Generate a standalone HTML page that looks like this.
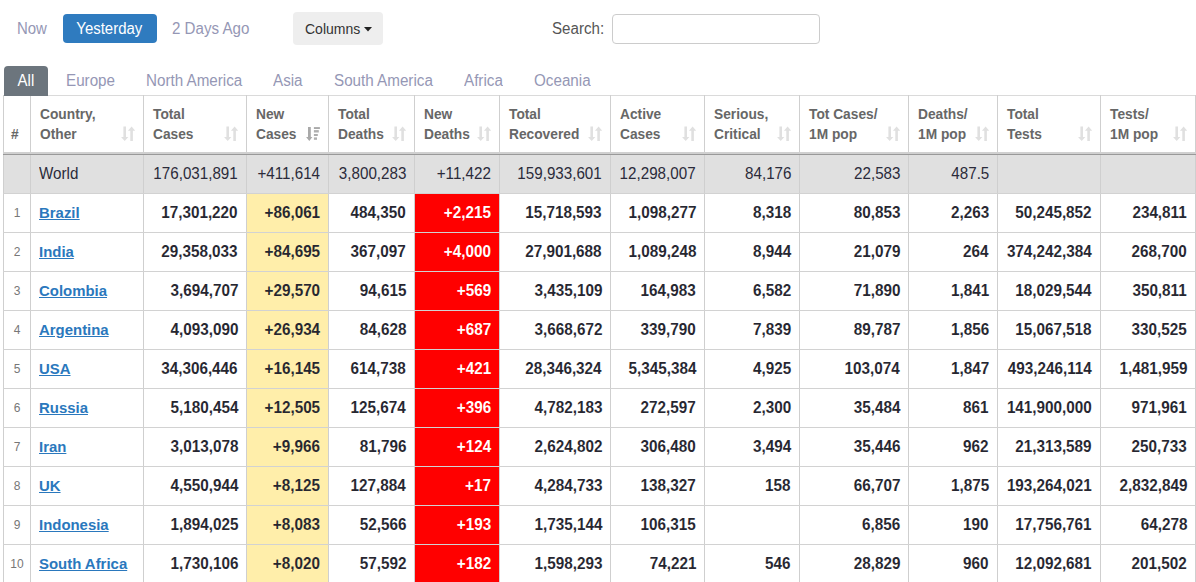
<!DOCTYPE html>
<html><head><meta charset="utf-8"><title>Coronavirus table</title>
<style>
html,body{margin:0;padding:0;background:#fff;}
body{width:1196px;height:582px;overflow:hidden;position:relative;font-family:"Liberation Sans",sans-serif;}
.a{position:absolute;white-space:nowrap;}
.top{font-size:16px;line-height:20px;color:#9597b5;}
.sx{display:inline-block;transform:scaleX(0.935);transform-origin:0 50%;}
.sc{display:inline-block;transform:scaleX(0.935);transform-origin:50% 50%;}
.btn{position:absolute;left:63px;top:14px;width:94px;height:29px;background:#2f7bbf;border-radius:4px;color:#fff;font-size:16px;line-height:29px;text-align:center;}
.cols{position:absolute;left:293px;top:12px;width:90px;height:33px;background:#eeeeee;border-radius:4px;color:#333;font-size:14px;line-height:33px;}
.srch{position:absolute;left:612px;top:14px;width:206px;height:28px;border:1px solid #ccc;border-radius:4px;background:#fff;}
.tab{position:absolute;top:66px;height:30px;line-height:30px;font-size:16px;color:#9597b5;}
.tabA{position:absolute;z-index:2;left:4px;top:66px;width:44px;height:30px;background:#6c757d;border-radius:4px 4px 0 0;color:#fff;font-size:16px;line-height:30px;text-align:center;}
.vl{position:absolute;width:1px;background:#cfcfcf;}
.hl{position:absolute;height:1px;background:#d2d2d2;}
.th{position:absolute;font-weight:bold;font-size:13.75px;line-height:20px;color:#676767;white-space:nowrap;}
.td{position:absolute;font-size:16.5px;line-height:38px;height:38px;white-space:nowrap;text-align:right;font-weight:bold;color:#262630;}
.td span{display:inline-block;transform:scaleX(0.925);transform-origin:100% 50%;-webkit-text-stroke:0.05px #fff;}
.ty span{-webkit-text-stroke-color:#ffeeaa;}
.tr span{-webkit-text-stroke-color:#ff0000;}
.wd span{-webkit-text-stroke:0;}
.wd span{transform:scaleX(0.92);}
.rk{position:absolute;font-size:12px;line-height:38px;height:38px;text-align:center;color:#777;}
.cn{position:absolute;font-size:15.5px;transform:scaleX(0.963);transform-origin:0 50%;line-height:38px;height:38px;font-weight:bold;color:#2a78bd;text-decoration:underline;white-space:nowrap;}
.wd{font-weight:normal;color:#2b2b3a;}
.wd.l span{transform-origin:0 50%;}
</style></head><body>

<div class="a top" style="left:17px;top:19px;"><span class="sx">Now</span></div>
<div class="btn"><span class="sc" style="margin-left:-1px">Yesterday</span></div>
<div class="a top" style="left:172px;top:19px;"><span class="sx" style="transform:scaleX(0.945)">2 Days Ago</span></div>
<div class="cols"><span style="position:absolute;left:12px;top:1px;">Columns</span><svg style="position:absolute;left:71px;top:15px" width="8" height="5" viewBox="0 0 8 5"><path d="M0 0H8L4 4.5Z" fill="#222"/></svg></div>
<div class="a top" style="left:552px;top:19px;color:#555;"><span class="sx" style="transform:scaleX(0.945)">Search:</span></div>
<div class="srch"></div>
<div class="tabA"><span class="sc">All</span></div>
<div class="tab" style="left:66px;"><span class="sx" style="transform:scaleX(0.95)">Europe</span></div>
<div class="tab" style="left:146px;"><span class="sx" style="transform:scaleX(0.95)">North America</span></div>
<div class="tab" style="left:273px;"><span class="sx" style="transform:scaleX(0.95)">Asia</span></div>
<div class="tab" style="left:334px;"><span class="sx" style="transform:scaleX(0.95)">South America</span></div>
<div class="tab" style="left:464px;"><span class="sx" style="transform:scaleX(0.95)">Africa</span></div>
<div class="tab" style="left:534px;"><span class="sx" style="transform:scaleX(0.95)">Oceania</span></div>
<div class="a" style="left:4px;top:155px;width:1191px;height:38px;background:#e0e0e0;"></div>
<div class="a" style="left:247px;top:194px;width:81px;height:38px;background:#ffeeaa;"></div>
<div class="a" style="left:415px;top:194px;width:84px;height:38px;background:#ff0000;"></div>
<div class="a" style="left:247px;top:233px;width:81px;height:38px;background:#ffeeaa;"></div>
<div class="a" style="left:415px;top:233px;width:84px;height:38px;background:#ff0000;"></div>
<div class="a" style="left:247px;top:272px;width:81px;height:38px;background:#ffeeaa;"></div>
<div class="a" style="left:415px;top:272px;width:84px;height:38px;background:#ff0000;"></div>
<div class="a" style="left:247px;top:311px;width:81px;height:38px;background:#ffeeaa;"></div>
<div class="a" style="left:415px;top:311px;width:84px;height:38px;background:#ff0000;"></div>
<div class="a" style="left:247px;top:350px;width:81px;height:38px;background:#ffeeaa;"></div>
<div class="a" style="left:415px;top:350px;width:84px;height:38px;background:#ff0000;"></div>
<div class="a" style="left:247px;top:389px;width:81px;height:38px;background:#ffeeaa;"></div>
<div class="a" style="left:415px;top:389px;width:84px;height:38px;background:#ff0000;"></div>
<div class="a" style="left:247px;top:428px;width:81px;height:38px;background:#ffeeaa;"></div>
<div class="a" style="left:415px;top:428px;width:84px;height:38px;background:#ff0000;"></div>
<div class="a" style="left:247px;top:467px;width:81px;height:38px;background:#ffeeaa;"></div>
<div class="a" style="left:415px;top:467px;width:84px;height:38px;background:#ff0000;"></div>
<div class="a" style="left:247px;top:506px;width:81px;height:38px;background:#ffeeaa;"></div>
<div class="a" style="left:415px;top:506px;width:84px;height:38px;background:#ff0000;"></div>
<div class="a" style="left:247px;top:545px;width:81px;height:38px;background:#ffeeaa;"></div>
<div class="a" style="left:415px;top:545px;width:84px;height:38px;background:#ff0000;"></div>
<div class="hl" style="left:3px;top:95px;width:1193px;background:#dadada;"></div>
<div class="vl" style="left:3px;top:95px;height:487px;"></div>
<div class="vl" style="left:30px;top:95px;height:487px;"></div>
<div class="vl" style="left:143px;top:95px;height:487px;"></div>
<div class="vl" style="left:246px;top:95px;height:487px;"></div>
<div class="vl" style="left:328px;top:95px;height:487px;"></div>
<div class="vl" style="left:414px;top:95px;height:487px;"></div>
<div class="vl" style="left:499px;top:95px;height:487px;"></div>
<div class="vl" style="left:610px;top:95px;height:487px;"></div>
<div class="vl" style="left:704px;top:95px;height:487px;"></div>
<div class="vl" style="left:799px;top:95px;height:487px;"></div>
<div class="vl" style="left:908px;top:95px;height:487px;"></div>
<div class="vl" style="left:997px;top:95px;height:487px;"></div>
<div class="vl" style="left:1100px;top:95px;height:487px;"></div>
<div class="vl" style="left:1195px;top:95px;height:487px;"></div>
<div class="hl" style="left:3px;top:152px;width:1193px;height:2px;background:#d0d0d0;"></div>
<div class="hl" style="left:3px;top:154px;width:1193px;background:#999;"></div>
<div class="hl" style="left:3px;top:193px;width:1193px;"></div>
<div class="hl" style="left:3px;top:232px;width:1193px;"></div>
<div class="hl" style="left:3px;top:271px;width:1193px;"></div>
<div class="hl" style="left:3px;top:310px;width:1193px;"></div>
<div class="hl" style="left:3px;top:349px;width:1193px;"></div>
<div class="hl" style="left:3px;top:388px;width:1193px;"></div>
<div class="hl" style="left:3px;top:427px;width:1193px;"></div>
<div class="hl" style="left:3px;top:466px;width:1193px;"></div>
<div class="hl" style="left:3px;top:505px;width:1193px;"></div>
<div class="hl" style="left:3px;top:544px;width:1193px;"></div>
<div class="hl" style="left:3px;top:583px;width:1193px;"></div>
<div class="th" style="left:11px;top:125px;">#</div>
<div class="th" style="left:40px;top:105px;">Country,<br>Other</div>
<div class="a" style="left:121px;top:126px;width:15px;height:16px;"><svg width="15" height="16" viewBox="0 0 15 16"><path d="M2.4 0.4H5V11H7.35L3.7 15.1L0.05 11H2.4Z M9.3 4.7H6.95L10.6 0.4L14.25 4.7H11.9V14.9H9.3Z" fill="#e0e0e0"/></svg></div>
<div class="th" style="left:153px;top:105px;">Total<br>Cases</div>
<div class="a" style="left:224px;top:126px;width:15px;height:16px;"><svg width="15" height="16" viewBox="0 0 15 16"><path d="M2.4 0.4H5V11H7.35L3.7 15.1L0.05 11H2.4Z M9.3 4.7H6.95L10.6 0.4L14.25 4.7H11.9V14.9H9.3Z" fill="#e0e0e0"/></svg></div>
<div class="th" style="left:256px;top:105px;">New<br>Cases</div>
<div class="a" style="left:306px;top:126px;width:15px;height:16px;"><svg width="15" height="16" viewBox="0 0 15 16"><path d="M2 0.9H4.8V10.9H6.4L3.3 14.9L0.1 10.9H2Z" fill="#a9a9a9"/><rect x="7.9" y="1.1" width="6" height="1.9" fill="#a9a9a9"/><rect x="7.9" y="4.1" width="4.9" height="2.4" fill="#b0b0b0"/><rect x="7.9" y="8" width="3.9" height="2" fill="#adadad"/><rect x="7.9" y="11.4" width="3.1" height="2.4" fill="#b0b0b0"/></svg></div>
<div class="th" style="left:338px;top:105px;">Total<br>Deaths</div>
<div class="a" style="left:392px;top:126px;width:15px;height:16px;"><svg width="15" height="16" viewBox="0 0 15 16"><path d="M2.4 0.4H5V11H7.35L3.7 15.1L0.05 11H2.4Z M9.3 4.7H6.95L10.6 0.4L14.25 4.7H11.9V14.9H9.3Z" fill="#e0e0e0"/></svg></div>
<div class="th" style="left:424px;top:105px;">New<br>Deaths</div>
<div class="a" style="left:477px;top:126px;width:15px;height:16px;"><svg width="15" height="16" viewBox="0 0 15 16"><path d="M2.4 0.4H5V11H7.35L3.7 15.1L0.05 11H2.4Z M9.3 4.7H6.95L10.6 0.4L14.25 4.7H11.9V14.9H9.3Z" fill="#e0e0e0"/></svg></div>
<div class="th" style="left:509px;top:105px;">Total<br>Recovered</div>
<div class="a" style="left:588px;top:126px;width:15px;height:16px;"><svg width="15" height="16" viewBox="0 0 15 16"><path d="M2.4 0.4H5V11H7.35L3.7 15.1L0.05 11H2.4Z M9.3 4.7H6.95L10.6 0.4L14.25 4.7H11.9V14.9H9.3Z" fill="#e0e0e0"/></svg></div>
<div class="th" style="left:620px;top:105px;">Active<br>Cases</div>
<div class="a" style="left:682px;top:126px;width:15px;height:16px;"><svg width="15" height="16" viewBox="0 0 15 16"><path d="M2.4 0.4H5V11H7.35L3.7 15.1L0.05 11H2.4Z M9.3 4.7H6.95L10.6 0.4L14.25 4.7H11.9V14.9H9.3Z" fill="#e0e0e0"/></svg></div>
<div class="th" style="left:714px;top:105px;">Serious,<br>Critical</div>
<div class="a" style="left:777px;top:126px;width:15px;height:16px;"><svg width="15" height="16" viewBox="0 0 15 16"><path d="M2.4 0.4H5V11H7.35L3.7 15.1L0.05 11H2.4Z M9.3 4.7H6.95L10.6 0.4L14.25 4.7H11.9V14.9H9.3Z" fill="#e0e0e0"/></svg></div>
<div class="th" style="left:809px;top:105px;">Tot&nbsp;Cases/<br>1M pop</div>
<div class="a" style="left:886px;top:126px;width:15px;height:16px;"><svg width="15" height="16" viewBox="0 0 15 16"><path d="M2.4 0.4H5V11H7.35L3.7 15.1L0.05 11H2.4Z M9.3 4.7H6.95L10.6 0.4L14.25 4.7H11.9V14.9H9.3Z" fill="#e0e0e0"/></svg></div>
<div class="th" style="left:918px;top:105px;">Deaths/<br>1M pop</div>
<div class="a" style="left:975px;top:126px;width:15px;height:16px;"><svg width="15" height="16" viewBox="0 0 15 16"><path d="M2.4 0.4H5V11H7.35L3.7 15.1L0.05 11H2.4Z M9.3 4.7H6.95L10.6 0.4L14.25 4.7H11.9V14.9H9.3Z" fill="#e0e0e0"/></svg></div>
<div class="th" style="left:1007px;top:105px;">Total<br>Tests</div>
<div class="a" style="left:1078px;top:126px;width:15px;height:16px;"><svg width="15" height="16" viewBox="0 0 15 16"><path d="M2.4 0.4H5V11H7.35L3.7 15.1L0.05 11H2.4Z M9.3 4.7H6.95L10.6 0.4L14.25 4.7H11.9V14.9H9.3Z" fill="#e0e0e0"/></svg></div>
<div class="th" style="left:1110px;top:105px;">Tests/<br>1M pop</div>
<div class="a" style="left:1173px;top:126px;width:15px;height:16px;"><svg width="15" height="16" viewBox="0 0 15 16"><path d="M2.4 0.4H5V11H7.35L3.7 15.1L0.05 11H2.4Z M9.3 4.7H6.95L10.6 0.4L14.25 4.7H11.9V14.9H9.3Z" fill="#e0e0e0"/></svg></div>
<div class="td wd l" style="left:39px;top:154px;text-align:left;"><span>World</span></div>
<div class="td wd" style="left:144px;width:94px;top:154px;"><span>176,031,891</span></div>
<div class="td wd" style="left:247px;width:73px;top:154px;"><span>+411,614</span></div>
<div class="td wd" style="left:329px;width:77px;top:154px;"><span>3,800,283</span></div>
<div class="td wd" style="left:415px;width:76px;top:154px;"><span>+11,422</span></div>
<div class="td wd" style="left:500px;width:102px;top:154px;"><span>159,933,601</span></div>
<div class="td wd" style="left:611px;width:85px;top:154px;"><span>12,298,007</span></div>
<div class="td wd" style="left:705px;width:86px;top:154px;"><span>84,176</span></div>
<div class="td wd" style="left:800px;width:100px;top:154px;"><span>22,583</span></div>
<div class="td wd" style="left:909px;width:80px;top:154px;"><span>487.5</span></div>
<div class="rk" style="left:4px;width:26px;top:194px;">1</div>
<div class="cn" style="left:39px;top:194px;">Brazil</div>
<div class="td" style="left:144px;width:94px;top:193px;"><span>17,301,220</span></div>
<div class="td ty" style="left:247px;width:73px;top:193px;"><span>+86,061</span></div>
<div class="td" style="left:329px;width:77px;top:193px;"><span>484,350</span></div>
<div class="td tr" style="left:415px;width:76px;top:193px;color:#fff;"><span>+2,215</span></div>
<div class="td" style="left:500px;width:102px;top:193px;"><span>15,718,593</span></div>
<div class="td" style="left:611px;width:85px;top:193px;"><span>1,098,277</span></div>
<div class="td" style="left:705px;width:86px;top:193px;"><span>8,318</span></div>
<div class="td" style="left:800px;width:100px;top:193px;"><span>80,853</span></div>
<div class="td" style="left:909px;width:80px;top:193px;"><span>2,263</span></div>
<div class="td" style="left:998px;width:94px;top:193px;"><span>50,245,852</span></div>
<div class="td" style="left:1101px;width:86px;top:193px;"><span>234,811</span></div>
<div class="rk" style="left:4px;width:26px;top:233px;">2</div>
<div class="cn" style="left:39px;top:233px;">India</div>
<div class="td" style="left:144px;width:94px;top:232px;"><span>29,358,033</span></div>
<div class="td ty" style="left:247px;width:73px;top:232px;"><span>+84,695</span></div>
<div class="td" style="left:329px;width:77px;top:232px;"><span>367,097</span></div>
<div class="td tr" style="left:415px;width:76px;top:232px;color:#fff;"><span>+4,000</span></div>
<div class="td" style="left:500px;width:102px;top:232px;"><span>27,901,688</span></div>
<div class="td" style="left:611px;width:85px;top:232px;"><span>1,089,248</span></div>
<div class="td" style="left:705px;width:86px;top:232px;"><span>8,944</span></div>
<div class="td" style="left:800px;width:100px;top:232px;"><span>21,079</span></div>
<div class="td" style="left:909px;width:80px;top:232px;"><span>264</span></div>
<div class="td" style="left:998px;width:94px;top:232px;"><span>374,242,384</span></div>
<div class="td" style="left:1101px;width:86px;top:232px;"><span>268,700</span></div>
<div class="rk" style="left:4px;width:26px;top:272px;">3</div>
<div class="cn" style="left:39px;top:272px;">Colombia</div>
<div class="td" style="left:144px;width:94px;top:271px;"><span>3,694,707</span></div>
<div class="td ty" style="left:247px;width:73px;top:271px;"><span>+29,570</span></div>
<div class="td" style="left:329px;width:77px;top:271px;"><span>94,615</span></div>
<div class="td tr" style="left:415px;width:76px;top:271px;color:#fff;"><span>+569</span></div>
<div class="td" style="left:500px;width:102px;top:271px;"><span>3,435,109</span></div>
<div class="td" style="left:611px;width:85px;top:271px;"><span>164,983</span></div>
<div class="td" style="left:705px;width:86px;top:271px;"><span>6,582</span></div>
<div class="td" style="left:800px;width:100px;top:271px;"><span>71,890</span></div>
<div class="td" style="left:909px;width:80px;top:271px;"><span>1,841</span></div>
<div class="td" style="left:998px;width:94px;top:271px;"><span>18,029,544</span></div>
<div class="td" style="left:1101px;width:86px;top:271px;"><span>350,811</span></div>
<div class="rk" style="left:4px;width:26px;top:311px;">4</div>
<div class="cn" style="left:39px;top:311px;">Argentina</div>
<div class="td" style="left:144px;width:94px;top:310px;"><span>4,093,090</span></div>
<div class="td ty" style="left:247px;width:73px;top:310px;"><span>+26,934</span></div>
<div class="td" style="left:329px;width:77px;top:310px;"><span>84,628</span></div>
<div class="td tr" style="left:415px;width:76px;top:310px;color:#fff;"><span>+687</span></div>
<div class="td" style="left:500px;width:102px;top:310px;"><span>3,668,672</span></div>
<div class="td" style="left:611px;width:85px;top:310px;"><span>339,790</span></div>
<div class="td" style="left:705px;width:86px;top:310px;"><span>7,839</span></div>
<div class="td" style="left:800px;width:100px;top:310px;"><span>89,787</span></div>
<div class="td" style="left:909px;width:80px;top:310px;"><span>1,856</span></div>
<div class="td" style="left:998px;width:94px;top:310px;"><span>15,067,518</span></div>
<div class="td" style="left:1101px;width:86px;top:310px;"><span>330,525</span></div>
<div class="rk" style="left:4px;width:26px;top:350px;">5</div>
<div class="cn" style="left:39px;top:350px;">USA</div>
<div class="td" style="left:144px;width:94px;top:349px;"><span>34,306,446</span></div>
<div class="td ty" style="left:247px;width:73px;top:349px;"><span>+16,145</span></div>
<div class="td" style="left:329px;width:77px;top:349px;"><span>614,738</span></div>
<div class="td tr" style="left:415px;width:76px;top:349px;color:#fff;"><span>+421</span></div>
<div class="td" style="left:500px;width:102px;top:349px;"><span>28,346,324</span></div>
<div class="td" style="left:611px;width:85px;top:349px;"><span>5,345,384</span></div>
<div class="td" style="left:705px;width:86px;top:349px;"><span>4,925</span></div>
<div class="td" style="left:800px;width:100px;top:349px;"><span>103,074</span></div>
<div class="td" style="left:909px;width:80px;top:349px;"><span>1,847</span></div>
<div class="td" style="left:998px;width:94px;top:349px;"><span>493,246,114</span></div>
<div class="td" style="left:1101px;width:86px;top:349px;"><span>1,481,959</span></div>
<div class="rk" style="left:4px;width:26px;top:389px;">6</div>
<div class="cn" style="left:39px;top:389px;">Russia</div>
<div class="td" style="left:144px;width:94px;top:388px;"><span>5,180,454</span></div>
<div class="td ty" style="left:247px;width:73px;top:388px;"><span>+12,505</span></div>
<div class="td" style="left:329px;width:77px;top:388px;"><span>125,674</span></div>
<div class="td tr" style="left:415px;width:76px;top:388px;color:#fff;"><span>+396</span></div>
<div class="td" style="left:500px;width:102px;top:388px;"><span>4,782,183</span></div>
<div class="td" style="left:611px;width:85px;top:388px;"><span>272,597</span></div>
<div class="td" style="left:705px;width:86px;top:388px;"><span>2,300</span></div>
<div class="td" style="left:800px;width:100px;top:388px;"><span>35,484</span></div>
<div class="td" style="left:909px;width:80px;top:388px;"><span>861</span></div>
<div class="td" style="left:998px;width:94px;top:388px;"><span>141,900,000</span></div>
<div class="td" style="left:1101px;width:86px;top:388px;"><span>971,961</span></div>
<div class="rk" style="left:4px;width:26px;top:428px;">7</div>
<div class="cn" style="left:39px;top:428px;">Iran</div>
<div class="td" style="left:144px;width:94px;top:427px;"><span>3,013,078</span></div>
<div class="td ty" style="left:247px;width:73px;top:427px;"><span>+9,966</span></div>
<div class="td" style="left:329px;width:77px;top:427px;"><span>81,796</span></div>
<div class="td tr" style="left:415px;width:76px;top:427px;color:#fff;"><span>+124</span></div>
<div class="td" style="left:500px;width:102px;top:427px;"><span>2,624,802</span></div>
<div class="td" style="left:611px;width:85px;top:427px;"><span>306,480</span></div>
<div class="td" style="left:705px;width:86px;top:427px;"><span>3,494</span></div>
<div class="td" style="left:800px;width:100px;top:427px;"><span>35,446</span></div>
<div class="td" style="left:909px;width:80px;top:427px;"><span>962</span></div>
<div class="td" style="left:998px;width:94px;top:427px;"><span>21,313,589</span></div>
<div class="td" style="left:1101px;width:86px;top:427px;"><span>250,733</span></div>
<div class="rk" style="left:4px;width:26px;top:467px;">8</div>
<div class="cn" style="left:39px;top:467px;">UK</div>
<div class="td" style="left:144px;width:94px;top:466px;"><span>4,550,944</span></div>
<div class="td ty" style="left:247px;width:73px;top:466px;"><span>+8,125</span></div>
<div class="td" style="left:329px;width:77px;top:466px;"><span>127,884</span></div>
<div class="td tr" style="left:415px;width:76px;top:466px;color:#fff;"><span>+17</span></div>
<div class="td" style="left:500px;width:102px;top:466px;"><span>4,284,733</span></div>
<div class="td" style="left:611px;width:85px;top:466px;"><span>138,327</span></div>
<div class="td" style="left:705px;width:86px;top:466px;"><span>158</span></div>
<div class="td" style="left:800px;width:100px;top:466px;"><span>66,707</span></div>
<div class="td" style="left:909px;width:80px;top:466px;"><span>1,875</span></div>
<div class="td" style="left:998px;width:94px;top:466px;"><span>193,264,021</span></div>
<div class="td" style="left:1101px;width:86px;top:466px;"><span>2,832,849</span></div>
<div class="rk" style="left:4px;width:26px;top:506px;">9</div>
<div class="cn" style="left:39px;top:506px;">Indonesia</div>
<div class="td" style="left:144px;width:94px;top:505px;"><span>1,894,025</span></div>
<div class="td ty" style="left:247px;width:73px;top:505px;"><span>+8,083</span></div>
<div class="td" style="left:329px;width:77px;top:505px;"><span>52,566</span></div>
<div class="td tr" style="left:415px;width:76px;top:505px;color:#fff;"><span>+193</span></div>
<div class="td" style="left:500px;width:102px;top:505px;"><span>1,735,144</span></div>
<div class="td" style="left:611px;width:85px;top:505px;"><span>106,315</span></div>
<div class="td" style="left:800px;width:100px;top:505px;"><span>6,856</span></div>
<div class="td" style="left:909px;width:80px;top:505px;"><span>190</span></div>
<div class="td" style="left:998px;width:94px;top:505px;"><span>17,756,761</span></div>
<div class="td" style="left:1101px;width:86px;top:505px;"><span>64,278</span></div>
<div class="rk" style="left:4px;width:26px;top:545px;">10</div>
<div class="cn" style="left:39px;top:545px;">South Africa</div>
<div class="td" style="left:144px;width:94px;top:544px;"><span>1,730,106</span></div>
<div class="td ty" style="left:247px;width:73px;top:544px;"><span>+8,020</span></div>
<div class="td" style="left:329px;width:77px;top:544px;"><span>57,592</span></div>
<div class="td tr" style="left:415px;width:76px;top:544px;color:#fff;"><span>+182</span></div>
<div class="td" style="left:500px;width:102px;top:544px;"><span>1,598,293</span></div>
<div class="td" style="left:611px;width:85px;top:544px;"><span>74,221</span></div>
<div class="td" style="left:705px;width:86px;top:544px;"><span>546</span></div>
<div class="td" style="left:800px;width:100px;top:544px;"><span>28,829</span></div>
<div class="td" style="left:909px;width:80px;top:544px;"><span>960</span></div>
<div class="td" style="left:998px;width:94px;top:544px;"><span>12,092,681</span></div>
<div class="td" style="left:1101px;width:86px;top:544px;"><span>201,502</span></div>
</body></html>
